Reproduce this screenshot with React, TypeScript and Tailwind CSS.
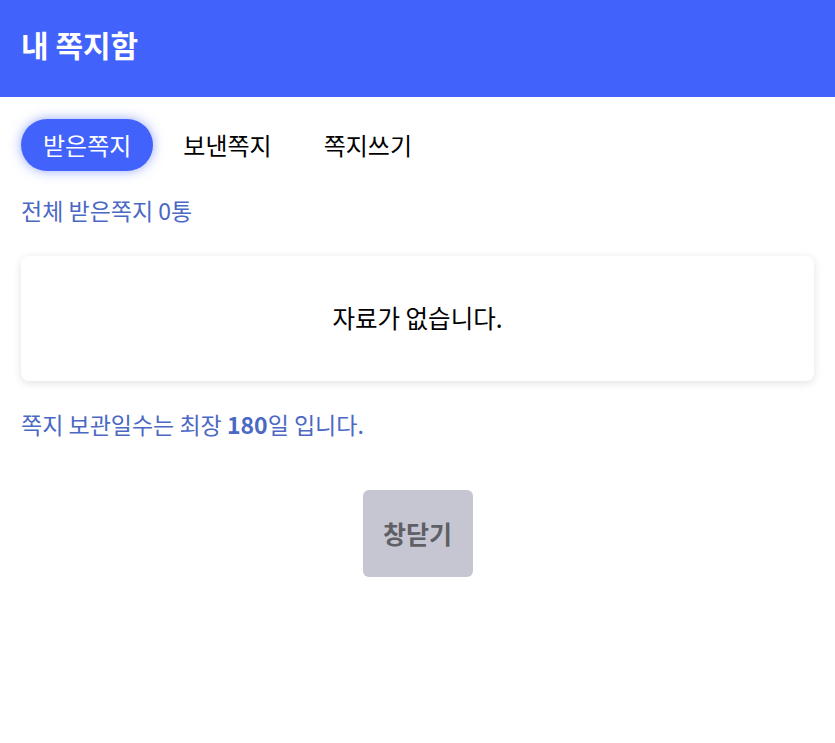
import React, { useState } from "react";

const tabs = ["받은쪽지", "보낸쪽지", "쪽지쓰기"];

export default function App() {
  const [active, setActive] = useState(0);

  return (
    <div
      className="min-h-screen bg-white"
      style={{ fontFamily: '"Noto Sans CJK KR", "Noto Sans", sans-serif' }}
    >
      {/* Header */}
      <header className="h-[97px] bg-[#4263fb] flex items-center px-[21px]">
        <h1 className="text-[30px] leading-[40px] font-bold text-white -mt-[10px]">
          내 쪽지함
        </h1>
      </header>

      <main className="px-[21px] pt-[22px]">
        {/* Tabs */}
        <div className="flex gap-2">
          {tabs.map((tab, i) => (
            <button
              key={tab}
              onClick={() => setActive(i)}
              className={
                i === active
                  ? "h-[52px] px-[22px] rounded-full bg-[#4263fb] text-white text-[24px] shadow-[0_0_12px_rgba(66,99,251,0.55)]"
                  : "h-[52px] px-[22px] rounded-full text-black text-[24px]"
              }
            >
              {tab}
            </button>
          ))}
        </div>

        <p className="mt-[24px] text-[23px] leading-[30px] text-[#4a68c4]">전체 받은쪽지 0통</p>

        {/* List */}
        <div className="mt-[31px] h-[125px] rounded-lg bg-white shadow-[0_2px_8px_rgba(0,0,0,0.12)] flex items-center justify-center">
          <p className="text-[24.5px] text-black">자료가 없습니다.</p>
        </div>

        <p className="mt-[28px] text-[23px] leading-[30px] text-[#4a68c4]">
          쪽지 보관일수는 최장 <b className="font-bold">180</b>일 입니다.
        </p>

        <div className="flex justify-center mt-[51px]">
          <button className="w-[110px] h-[87px] rounded-md bg-[#c6c6d2] text-[#5f5f66] text-[25px] font-bold">
            창닫기
          </button>
        </div>
      </main>
    </div>
  );
}
